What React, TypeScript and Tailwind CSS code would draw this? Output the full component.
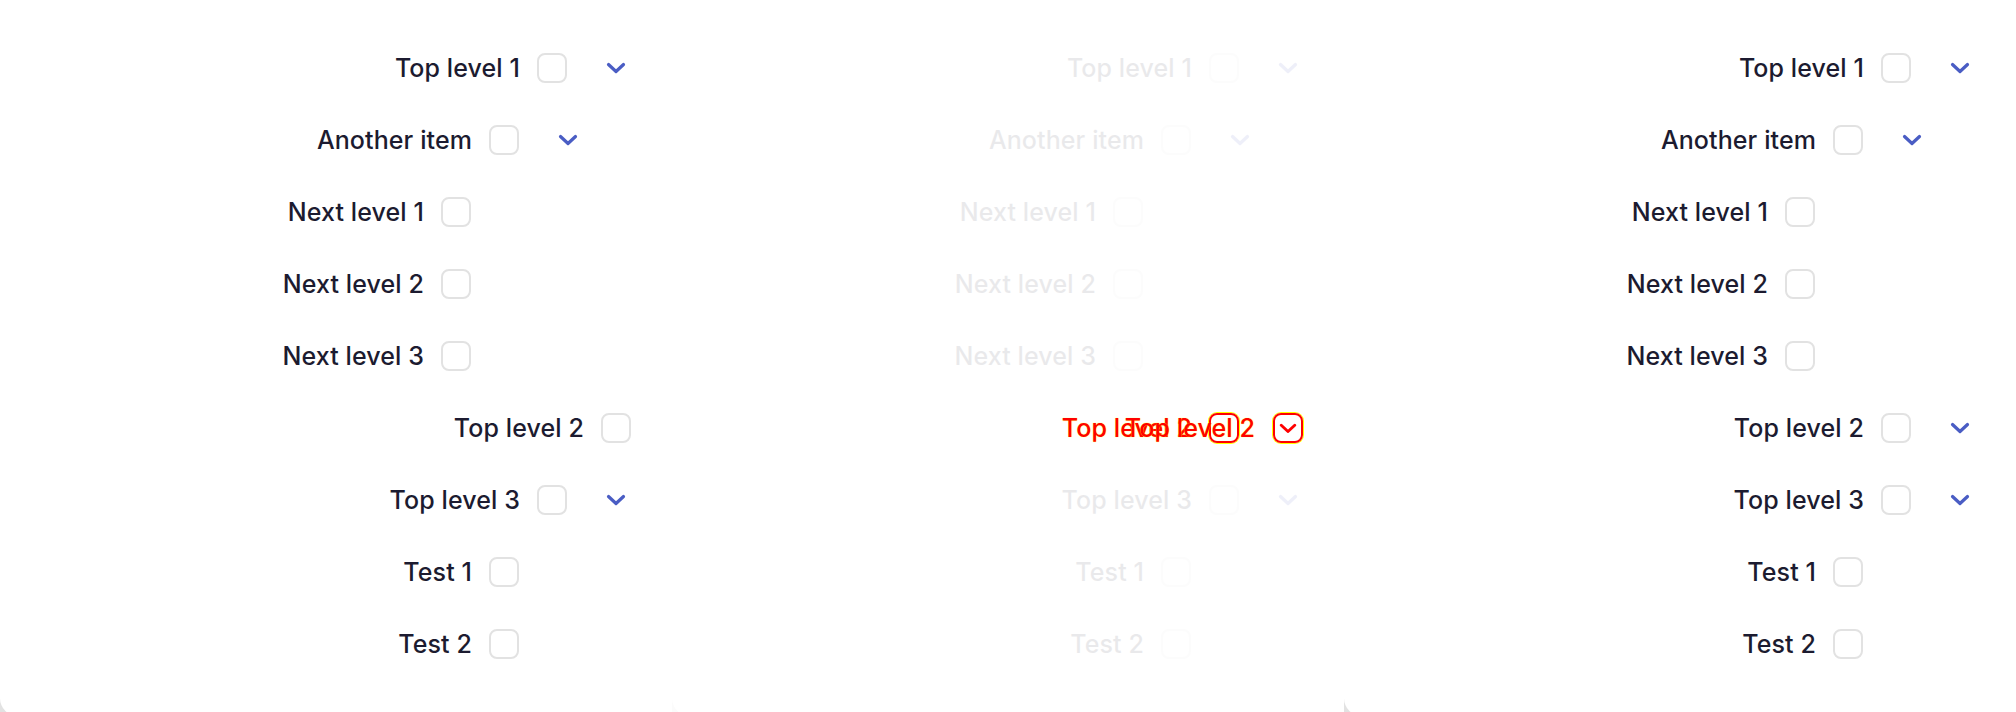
import React from "react";
import clsx from "clsx";

type Row = {
  label: string;
  depth: 0 | 1 | 2;
  chevron?: boolean;
  noSlot?: boolean;
  dragged?: boolean;
};

const PAD = ["pr-[41px]", "pr-[89px]", "pr-[137px]"];

const font = "pt-[2px] font-['Inter','Liberation_Sans',sans-serif] text-[25px] font-medium tracking-[0.1px]";

const Chevron = ({ color = "#4a5dc4", size = 20 }: { color?: string; size?: number }) => (
  <svg width={size} height={size * 0.6} viewBox="0 0 20 12" fill="none">
    <path d="M2.5 2.5 L10 9.5 L17.5 2.5" stroke={color} strokeWidth={3.2} strokeLinecap="round" strokeLinejoin="round" />
  </svg>
);

const TreeRow = ({ row, faded }: { row: Row; faded?: boolean }) => {
  if (row.dragged) {
    // drag preview drawn over the faded list
    const glow = "[text-shadow:0_0_1px_#ffff00]";
    const box = "h-[30px] w-[30px] rounded-[8px] border-2 border-[#ff0000] shadow-[0_0_0_1px_#ffff00]";
    return (
      <div className="relative flex h-[72px] items-center justify-end pr-[41px]">
        <span className={clsx("mr-[17px] text-[#ff0000]", font, glow)}>{row.label}</span>
        <span className={box} />
        <span className={clsx("ml-[34px] flex items-center justify-center", box)}>
          <Chevron color="#ff0000" size={18} />
        </span>
        <span className={clsx("absolute right-[89px] text-[#ff0000]", font, glow)}>{row.label}</span>
      </div>
    );
  }

  return (
    <div className={clsx("flex h-[72px] items-center justify-end", PAD[row.depth], faded && "opacity-[0.09]")}>
      <span className={clsx("mr-[17px] text-[#1c1b30]", font)}>{row.label}</span>
      <span className="h-[30px] w-[30px] rounded-[8px] border-2 border-[#e2e2e2]" />
      {!row.noSlot && (
        <span className="ml-[34px] flex h-[30px] w-[30px] items-center justify-center">
          {row.chevron && <Chevron />}
        </span>
      )}
    </div>
  );
};

const base: Row[] = [
  { label: "Top level 1", depth: 0, chevron: true },
  { label: "Another item", depth: 1, chevron: true },
  { label: "Next level 1", depth: 2 },
  { label: "Next level 2", depth: 2 },
  { label: "Next level 3", depth: 2 },
];

const tail: Row[] = [
  { label: "Top level 3", depth: 0, chevron: true },
  { label: "Test 1", depth: 1 },
  { label: "Test 2", depth: 1 },
];

const panels: { rows: Row[]; faded?: boolean }[] = [
  { rows: [...base, { label: "Top level 2", depth: 0, noSlot: true }, ...tail] },
  { rows: [...base, { label: "Top level 2", depth: 0, dragged: true }, ...tail], faded: true },
  { rows: [...base, { label: "Top level 2", depth: 0, chevron: true }, ...tail] },
];

export default function App() {
  return (
    <div className="flex h-[712px] w-[2016px] overflow-hidden bg-white">
      {panels.map((p, i) => (
        <div key={i} className={clsx("h-[716px] w-[672px] shrink-0", p.faded ? "bg-[#fbfbfb]" : "bg-[#e2e2e2]")}>
          <div className="h-full rounded-bl-[18px] bg-white pt-8">
            {p.rows.map((r) => (
              <TreeRow key={r.label} row={r} faded={p.faded} />
            ))}
          </div>
        </div>
      ))}
    </div>
  );
}
